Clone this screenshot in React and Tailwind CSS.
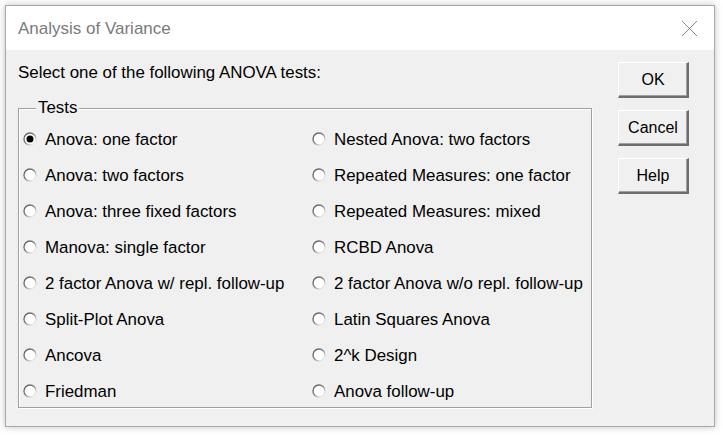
import React from 'react';

const left = [
  'Anova: one factor',
  'Anova: two factors',
  'Anova: three fixed factors',
  'Manova: single factor',
  '2 factor Anova w/ repl. follow-up',
  'Split-Plot Anova',
  'Ancova',
  'Friedman',
];

const right = [
  'Nested Anova: two factors',
  'Repeated Measures: one factor',
  'Repeated Measures: mixed',
  'RCBD Anova',
  '2 factor Anova w/o repl. follow-up',
  'Latin Squares Anova',
  '2^k Design',
  'Anova follow-up',
];

function Radio({ checked }) {
  return (
    <svg width="14" height="14" viewBox="0 0 14 14" className="shrink-0">
      <defs>
        <linearGradient id="ring" x1="0" y1="0" x2="1" y2="1">
          <stop offset="0" stopColor="#555555" />
          <stop offset="0.5" stopColor="#8c8c8c" />
          <stop offset="0.75" stopColor="#d6d6d6" />
          <stop offset="1" stopColor="#ffffff" />
        </linearGradient>
      </defs>
      <circle cx="7" cy="7" r="6" fill="#fff" stroke="url(#ring)" strokeWidth="1.4" />
      {checked && <circle cx="7" cy="7" r="3.5" fill="#000" />}
    </svg>
  );
}

function Option({ label, checked }) {
  return (
    <div className="flex items-center h-[36px]">
      <Radio checked={checked} />
      <span className="ml-[8px] whitespace-nowrap pt-[1px]">{label}</span>
    </div>
  );
}

function Button({ children }) {
  return (
    <div className="w-[71px] h-[36px] flex items-center justify-center bg-[#f0f0f0] border-t border-l border-white border-b-2 border-r-2 border-b-[#6d6d6d] border-r-[#6d6d6d] shadow-[inset_-1px_-1px_0_#a0a0a0] text-[16px] text-black">
      {children}
    </div>
  );
}

export default function App() {
  return (
    <div
      className="w-[723px] h-[436px] bg-white pt-[5px] pl-[5px] text-black"
      style={{ fontFamily: '"Liberation Sans", Arial, sans-serif' }}
    >
      <div className="w-[710px] h-[422px] border border-[#a8a8a8] shadow-[0_0_7px_rgba(0,0,0,0.25)] flex flex-col bg-[#f0f0f0]">
        {/* title bar */}
        <div className="h-[44px] bg-white flex items-center justify-between pl-[12px] pr-[16px] shrink-0">
          <span className="text-[17px] text-[#7a7a7a] pt-[1px]">Analysis of Variance</span>
          <svg width="17" height="17" viewBox="0 0 17 17">
            <path d="M1 1 L16 16 M16 1 L1 16" stroke="#8a8a8a" strokeWidth="1" fill="none" />
          </svg>
        </div>

        {/* body */}
        <div className="flex pl-[12px] text-[16.9px] leading-[20px]">
          <div className="w-[574px] flex flex-col pt-[13px]">
            <div>Select one of the following ANOVA tests:</div>
            <div className="relative mt-[25px] h-[300px] border border-[#a0a0a0] shadow-[inset_1px_1px_0_#fff,1px_1px_0_#fff]">
              <span className="absolute left-[17px] top-[-11px] px-[2px] bg-[#f0f0f0]">Tests</span>
              <div className="flex pt-[12px] pl-[4px]">
                <div className="w-[289px] flex flex-col">
                  {left.map((l, i) => (
                    <Option key={l} label={l} checked={i === 0} />
                  ))}
                </div>
                <div className="flex flex-col">
                  {right.map((l) => (
                    <Option key={l} label={l} />
                  ))}
                </div>
              </div>
            </div>
          </div>

          <div className="ml-[26px] pt-[12px] flex flex-col gap-[12px]">
            <Button>OK</Button>
            <Button>Cancel</Button>
            <Button>Help</Button>
          </div>
        </div>
      </div>
    </div>
  );
}
